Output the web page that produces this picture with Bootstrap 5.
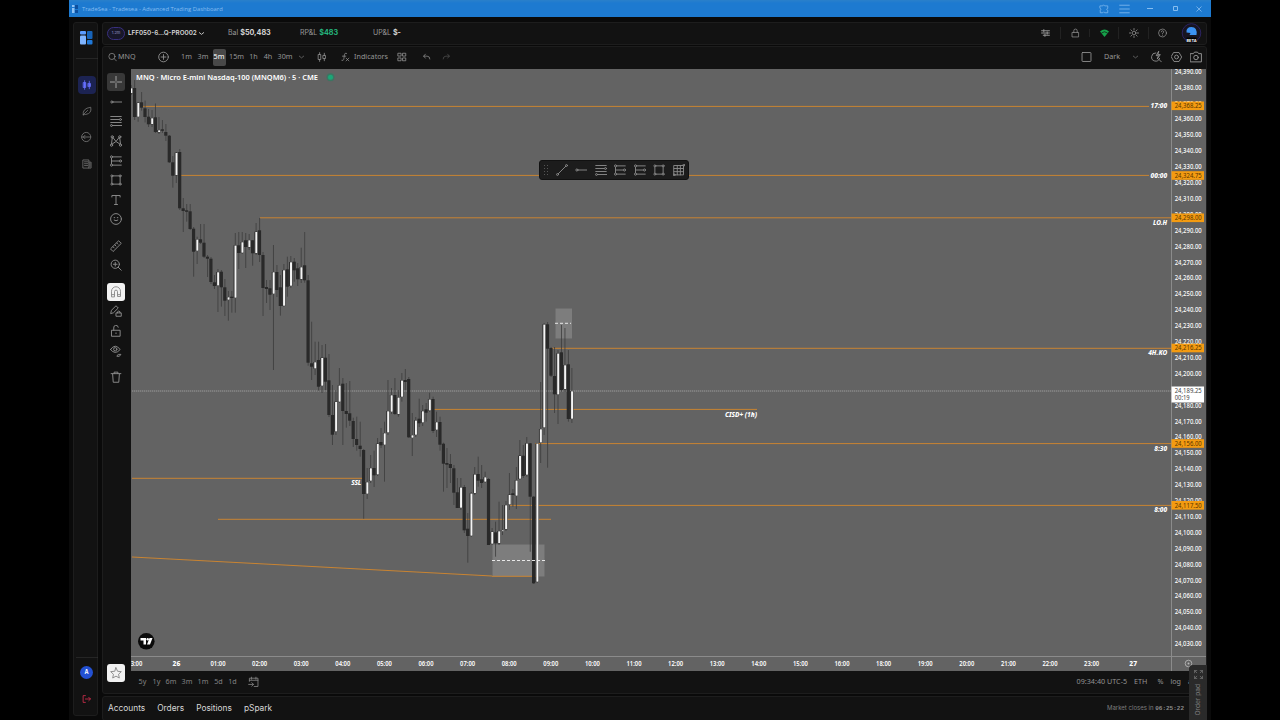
<!DOCTYPE html>
<html lang="en" data-bs-theme="dark">
<head>
<meta charset="utf-8">
<meta name="viewport" content="width=device-width, initial-scale=1">
<title>TradeSea - Advanced Trading Dashboard</title>
<link href="https://cdn.jsdelivr.net/npm/bootstrap@5.3.0/dist/css/bootstrap.min.css" rel="stylesheet">
<style>
body{background:#000;height:720px;overflow:hidden;font-family:Inter,"Noto Sans",sans-serif;font-size:7px;line-height:1;color:#a2a2a2}
svg{display:block}
.ico{width:12px;height:12px;fill:none;stroke:currentColor;stroke-width:1.25;stroke-linecap:round;stroke-linejoin:round;flex:none}
.window-shell{width:1142px;height:720px;margin-left:69px;background:#0a0a0a}
.title-strip{height:17px;background:linear-gradient(#2a80ca 0,#1d7ad0 3px,#1d7ad0);color:#86bdf0;font:5.85px "Open Sans",sans-serif;padding:1px 0 0 3px}
.title-strip .wintools{display:grid;grid-template-columns:20px 21px 30px 22px 24px;justify-items:center;align-items:center;color:#7fb8ee}
.work{height:703px;padding:5px 4px 0 4px;gap:4px}
.panel{background:#121212;border:1px solid #1d1d1d;border-radius:3px}
.rail{width:25px;height:694px;color:#777;padding-left:2px;flex:none}
.rail .cell{height:26.2px;width:18px}
.rail .cell.on span{width:18px;height:18px;border-radius:4px;background:#1c2352;color:#6670ff}
.rail hr{width:22px;margin:0;border-color:#444;opacity:.4}
.avatar{width:13px;height:13px;border-radius:50%;background:#2350d2;color:#fff;font-weight:700;font-size:5.5px}
.main-col{width:1105px;flex:none}
.account{height:23px;padding-bottom:3px;display:grid;grid-template-columns:4px 21px 100px 72px 73px 1fr repeat(6,29.2px);align-items:center;color:#989898;white-space:nowrap}
.account b{color:#d4d4d4;font-size:7.2px}
.account .acct{color:#d6d6d6;font-weight:600;font-size:6.3px}
.account .gain{color:#25b47c}
.account .sep{border-left:1px solid #222}
.idbadge{width:18px;height:13px;border:1px solid #39307f;border-radius:7px;background:#17172a;font-size:4px;color:#9693c8}
.trade{height:648px;margin-top:1px;border-radius:3px}
.toolrow{height:22px;padding-bottom:2px;font-family:"Noto Sans",sans-serif;font-size:7.2px;color:#969696;display:grid;grid-template-columns:3px 12px 31px 29px 17px 16px 16px 19px 15px 14px 20px 13px 28px 18px 34px 28px 20px 20px 1fr 20px 3px 26px 20px 1px 20px 20px 20px;align-items:center;justify-items:center}
.toolrow .picked{background:#484848;color:#fff;border-radius:2px;width:13px;height:17px}
.drawcol{width:28px;height:602px;padding:3.5px 2px 0 0;color:#8d8d8d}
.drawcol .cell{height:19.6px;width:18px}
.drawcol .g1{margin-top:6.6px}
.drawcol .g2{margin-top:7px}
.drawcol .sel span,.drawcol .lit span{width:18px;height:18px;border-radius:3px}
.drawcol .sel span{background:#383838;color:#aaa}
.drawcol .lit span{background:#f2f2f2;color:#8a8a8a}
.drawcol .fav{margin-bottom:-12px}
.ranges{height:22px;padding-left:32px;font-family:"Noto Sans",sans-serif;font-size:7.2px;color:#828282}
.ranges .clock{margin-right:4px;gap:7px;color:#929292}
.tabs-bar{height:25px;margin-top:2px;padding:0 22px 1px 5px;font-size:8.35px;color:#d8d8d8}
.tabs-bar .closing{font-size:6px;color:#7d7d7d}
.tabs-bar .closing code{font-family:"Liberation Mono",monospace;color:#8b8b8b;font-size:6px;font-weight:700}
.chartbox{width:1075px;height:602px;position:relative}
.float-tools{position:absolute;left:408px;top:91px;width:150px;height:20px;background:#1c1c1c;border-radius:3px;color:#8a8a8a;padding:0 3px 0 4px;border:1px solid #111}
.order-pad{position:absolute;left:1189px;top:665px;width:18px;height:55px;background:#2a2a2a;border-radius:4px 0 0 0;color:#7b7b7b;font-size:6.6px;padding-top:5px}
.order-pad span{writing-mode:vertical-rl;transform:rotate(180deg);margin-top:5px}
</style>
<script src="https://cdn.jsdelivr.net/npm/bootstrap@5.3.0/dist/js/bootstrap.bundle.min.js"></script>
</head>
<body>
<svg width="0" height="0" class="d-none">
<symbol id="i-cross" viewBox="0 0 16 16"><path d="M8 0v6M8 10v6M0 8h6M10 8h6M7.7 8h.6"/></symbol>
<symbol id="i-ray" viewBox="0 0 16 16"><circle cx="2.500" cy="8" r="1.400"/><path d="M4 8h12"/></symbol>
<symbol id="i-fib" viewBox="0 0 16 16"><path d="M1 2h14M1 6h11M1 10h14M4 14h12"/><circle cx="14" cy="6" r="1.300"/><circle cx="2" cy="14" r="1.300"/></symbol>
<symbol id="i-pattern" viewBox="0 0 16 16"><path d="M2 12L3 4M4 3.500L7.500 8M8.500 8L12 3.500M13 4l1 8M3 12l4.500-3M8.500 9l4.500 3"/><circle cx="3" cy="2.500" r="1.500"/><circle cx="13" cy="2.500" r="1.500"/><circle cx="2" cy="13.500" r="1.500"/><circle cx="14" cy="13.500" r="1.500"/></symbol>
<symbol id="i-forecast" viewBox="0 0 16 16"><path d="M4 2.500h11M2 8h10M4 13.500h11M2 4.500v7"/><circle cx="2" cy="2.500" r="1.400"/><circle cx="14" cy="8" r="1.400"/><circle cx="2" cy="13.500" r="1.400"/></symbol>
<symbol id="i-rect" viewBox="0 0 16 16"><path d="M4 2.500h8M4 13.500h8M2.500 4v8M13.500 4v8"/><circle cx="2.500" cy="2.500" r="1.300"/><circle cx="13.500" cy="2.500" r="1.300"/><circle cx="2.500" cy="13.500" r="1.300"/><circle cx="13.500" cy="13.500" r="1.300"/></symbol>
<symbol id="i-text" viewBox="0 0 16 16"><path d="M2.500 4V2h11v2M8 2v12M6 14h4"/></symbol>
<symbol id="i-smile" viewBox="0 0 16 16"><circle cx="8" cy="8" r="7.200"/><path d="M5.500 6.200h.8M9.700 6.200h.8M5.500 9.500q2.500 2 5 0"/></symbol>
<symbol id="i-ruler" viewBox="0 0 16 16"><path d="M1 11.500L11.500 1 15 4.500 4.500 15zM4 9l1.500 1.500M6.500 6.500L8 8M9 4l1.500 1.500"/></symbol>
<symbol id="i-zoom" viewBox="0 0 16 16"><circle cx="7" cy="7" r="5.500"/><path d="M11 11l4 4M4.500 7h5M7 4.500v5"/></symbol>
<symbol id="i-magnet" viewBox="0 0 16 16"><path d="M2 14V7a6 6 0 0 1 12 0v7h-4V7.500a2 2 0 0 0-4 0V14zM2 11.500h4M10 11.500h4"/></symbol>
<symbol id="i-penlock" viewBox="0 0 16 16"><path d="M1 11l1-4 6-6 3 3-6 6zM8.500 10.500h6.500V15H8.500zM10 10.500V9q1.700-2 3.400 0v1.500"/></symbol>
<symbol id="i-unlock" viewBox="0 0 16 16"><path d="M2.500 7h11v8h-11zM5 7V4a3 3 0 0 1 6-1M8 10.500v1"/></symbol>
<symbol id="i-lock" viewBox="0 0 16 16"><path d="M2.500 7h11v8h-11zM5 7V4a3 3 0 0 1 6 0v3"/></symbol>
<symbol id="i-eye" viewBox="0 0 16 16"><path d="M.7 6Q7-3 13.500 6 7 14 .7 6zM9.500 14l2-1.500h3l-2 2.500h-3"/><circle cx="7" cy="5.700" r="2.200"/></symbol>
<symbol id="i-trash" viewBox="0 0 16 16"><path d="M1.500 3.500h13M5.500 3.500v-2h5v2M3.500 4l.8 11h7.400l.8-11"/></symbol>
<symbol id="i-star" viewBox="0 0 16 16"><path d="M8 1l2.100 4.700 5 .5-3.700 3.500 1 5L8 12.200l-4.400 2.500 1-5L.9 6.200l5-.5z"/></symbol>
<symbol id="i-search" viewBox="0 0 16 16"><circle cx="7" cy="7" r="5.500"/><path d="M11 11l4 4"/></symbol>
<symbol id="i-plus" viewBox="0 0 16 16"><circle cx="8" cy="8" r="7"/><path d="M4.500 8h7M8 4.500v7"/></symbol>
<symbol id="i-down" viewBox="0 0 16 16"><path d="M3 6l5 4 5-4"/></symbol>
<symbol id="i-candle" viewBox="0 0 16 16"><path d="M2.500 4h3.500v8H2.500zM4.200 1v3M4.200 12v3M10 5.500h3.500v5H10zM11.700 2v3.500M11.700 10.500V14"/></symbol>
<symbol id="i-fx" viewBox="0 0 16 16"><path d="M10 1.500Q6.500 0 6 4L5 12q-.5 3-3.500 2M2.500 6.500h6M9 10l5 5M14 10l-5 5"/></symbol>
<symbol id="i-grid" viewBox="0 0 16 16"><path d="M2 2h4.500v4.500H2zM9.500 2H14v4.500H9.500zM2 9.500h4.500V14H2zM9.500 9.500H14V14H9.500z"/></symbol>
<symbol id="i-undo" viewBox="0 0 16 16"><path d="M6 3L3 6.500 6 10M3 6.500h6q5 0 5 5"/></symbol>
<symbol id="i-redo" viewBox="0 0 16 16"><path d="M10 3l3 3.500L10 10M13 6.500H7q-5 0-5 5"/></symbol>
<symbol id="i-square" viewBox="0 0 16 16"><rect x="1.500" y="1.500" width="13" height="13" rx="1"/></symbol>
<symbol id="i-quick" viewBox="0 0 16 16"><path d="M7 2a6 6 0 1 0 5.500 8M11.500 11.500L15 15M11 0L7.500 6H11l-2 5 4.500-6.500h-3z"/></symbol>
<symbol id="i-hex" viewBox="0 0 16 16"><path d="M4.300 1.500h7.400L15.500 8l-3.800 6.500H4.300L.5 8z"/><circle cx="8" cy="8" r="2.800"/></symbol>
<symbol id="i-cam" viewBox="0 0 16 16"><path d="M.8 3.500H4.500L6 1.500h4l1.500 2h3.700v11H.8z"/><circle cx="8" cy="8.700" r="3"/></symbol>
<symbol id="i-sliders" viewBox="0 0 16 16"><path d="M1 4h14M1 8h14M4 12h11M5 2v4M11 6v4M7 10v4" stroke-width="1.700"/></symbol>
<symbol id="i-sun" viewBox="0 0 16 16"><circle cx="8" cy="8" r="3"/><path d="M8 .8v2M8 13.200v2M.8 8h2M13.200 8h2M3 3l1.300 1.300M11.700 11.700L13 13M3 13l1.300-1.300M11.700 4.300L13 3"/></symbol>
<symbol id="i-help" viewBox="0 0 16 16"><circle cx="8" cy="8" r="7"/><path d="M5.800 6Q6 4 8 4t2.200 2Q10.200 7.200 8 8.500v.8M8 11.800v.3"/></symbol>
<symbol id="i-leaf" viewBox="0 0 16 16"><path d="M2 14Q0 4 14 2 16 12 6 13.500 3.500 13.700 2 14zM2 14l7-7"/></symbol>
<symbol id="i-globe" viewBox="0 0 16 16"><circle cx="8" cy="8" r="7"/><path d="M1 8h12M6 5.500L3.500 8 6 10.500"/></symbol>
<symbol id="i-doc" viewBox="0 0 16 16"><path d="M2 1.500h9v13H2zM11 5h3.500v9.500H11M4 4.500h5M4 7.500h5M4 10.500h5M12.700 7v5"/></symbol>
<symbol id="i-out" viewBox="0 0 16 16"><path d="M6 2H2v12h4M6 8h9M12 5l3 3-3 3" stroke-width="1.600"/></symbol>
<symbol id="i-cal" viewBox="0 0 16 16"><path d="M2 7V2.500h12.500v12H9M2 5.500h12.500M5 1v3M11.500 1v3M1 11.500h7M5.500 9L8 11.500 5.500 14"/></symbol>
<symbol id="i-puzzle" viewBox="0 0 16 16"><path d="M2 3h4q1-3.500 3 0h5v4q-4 1.500 0 3v4H9q-1.500-3-3 0H2v-4q3-2 0-3z"/></symbol>
<symbol id="i-menu" viewBox="0 0 16 16"><path d="M1 2.500h14M1 8h14M1 13.500h14"/></symbol>
<symbol id="i-line" viewBox="0 0 16 16"><path d="M3 13L13 3"/><circle cx="2" cy="14" r="1.300"/><circle cx="14" cy="2" r="1.300"/></symbol>
<symbol id="i-gridbox" viewBox="0 0 16 16"><path d="M1.500 2h12.500v12.500H1.500zM5.700 2v12.500M9.800 2v12.500M1.500 6H14M1.500 10.200H14"/><circle cx="14.500" cy="1.500" r="1.300"/><circle cx="1.500" cy="14.500" r="1.300"/></symbol>
<symbol id="i-expand" viewBox="0 0 16 16"><path d="M1 5V1h4M11 1h4v4M15 11v4h-4M5 15H1v-4M1 1l4 4M15 1l-4 4M15 15l-4-4M1 15l4-4"/></symbol>
</svg>

<div class="window-shell">
  <header class="title-strip d-flex align-items-center justify-content-between">
    <div class="d-flex align-items-center gap-1">
      <svg width="6" height="8" viewBox="0 0 6 8"><path fill="#8fc2f5" d="M0 0h2.500v2H0zM0 3h2.500v5H0z"/><path fill="#0d4f9e" d="M3 0h3v4H3zM3 5h3v3H3z"/></svg>
      <span>TradeSea - Tradesea - Advanced Trading Dashboard</span>
    </div>
    <div class="wintools">
      <svg class="ico" style="width:10px"><use href="#i-puzzle"/></svg>
      <svg class="ico" style="width:11px"><use href="#i-menu"/></svg>
      <svg width="6" height="6"><path d="M0 2.500h6" stroke="#86bdf0"/></svg>
      <svg width="6" height="6"><path d="M.5.500h4v4h-4z" stroke="#86bdf0" fill="none"/></svg>
      <svg width="6" height="6"><path d="M.5.500l5 5M5.500.500l-5 5" stroke="#86bdf0" stroke-width=".8"/></svg>
    </div>
  </header>
  <div class="work d-flex">
    <aside class="rail panel d-flex flex-column align-items-center">
      <svg width="13" height="14" viewBox="0 0 13 14" style="margin-top:8px"><rect width="6" height="3.500" rx="1" fill="#5b9cff"/><rect y="4.500" width="6" height="9" rx="1" fill="#7eb4ff"/><rect x="7" width="5.500" height="8" rx="1" fill="#1763b8"/><rect x="7" y="9" width="5.500" height="4.500" rx="1" fill="#1f78d8"/></svg>
      <hr style="margin:13px 0">
      <div class="cell on d-flex align-items-center justify-content-center"><span class="d-flex align-items-center justify-content-center"><svg class="ico" style="fill:currentColor;width:10px"><use href="#i-candle"/></svg></span></div>
      <div class="cell d-flex align-items-center justify-content-center"><svg class="ico" style="width:10px"><use href="#i-leaf"/></svg></div>
      <div class="cell d-flex align-items-center justify-content-center"><svg class="ico" style="width:10.500px"><use href="#i-globe"/></svg></div>
      <div class="cell d-flex align-items-center justify-content-center"><svg class="ico" style="width:10px"><use href="#i-doc"/></svg></div>
      <hr class="mt-auto">
      <div class="avatar d-flex align-items-center justify-content-center" style="margin-top:8px">A</div>
      <svg class="ico" style="width:9px;color:#c52d49;margin:14px 0 10px"><use href="#i-out"/></svg>
    </aside>
    <main class="main-col">
      <div class="account panel">
        <span></span>
        <span class="idbadge d-flex align-items-center justify-content-center">1.2m</span>
        <span class="acct d-flex align-items-center">LFF050-6...Q-PRO002 <svg class="ico" style="width:7px;height:7px;margin-left:1px;stroke-width:2"><use href="#i-down"/></svg></span>
        <span>Bal <b>$50,483</b></span>
        <span>RP&amp;L <b class="gain">$483</b></span>
        <span>UP&amp;L <b>$-</b></span>
        <span><svg class="ico mx-auto" style="width:9px"><use href="#i-sliders"/></svg></span>
        <span class="sep"><svg class="ico mx-auto" style="width:9px"><use href="#i-lock"/></svg></span>
        <span class="sep"><svg class="mx-auto" width="9" height="8" viewBox="0 0 9 8"><path fill="#16a24a" d="M0 2.500Q4.500-1.500 9 2.500L4.500 8z"/><path d="M1.500 4Q4.500 1.500 7.500 4" fill="none" stroke="#121212" stroke-width=".7"/></svg></span>
        <span class="sep"><svg class="ico mx-auto" style="width:10px"><use href="#i-sun"/></svg></span>
        <span class="sep"><svg class="ico mx-auto" style="width:9px"><use href="#i-help"/></svg></span>
        <span><svg class="mx-auto" width="21" height="20" viewBox="0 0 21 20"><circle cx="10.500" cy="10" r="9.300" fill="#171421" stroke="#2b2260"/><path fill="#3b92f2" d="M5.500 9.500q-.5-5.500 5-5.500 6 0 5 8H8.500l1-2z"/><rect x="5.500" y="14.500" width="10" height="5" fill="#000"/><text x="10.500" y="18.500" font-size="3.900" font-weight="700" fill="#fff" text-anchor="middle">BETA</text></svg></span>
      </div>
      <section class="trade panel">
        <div class="toolrow">
          <span></span><svg class="ico" style="width:9px"><use href="#i-search"/></svg><span class="me-auto">MNQ</span><svg class="ico" style="width:11px"><use href="#i-plus"/></svg>
          <span>1m</span><span>3m</span><span class="picked d-flex align-items-center justify-content-center">5m</span><span>15m</span><span>1h</span><span>4h</span><span>30m</span>
          <svg class="ico" style="width:7px"><use href="#i-down"/></svg><svg class="ico" style="width:10px"><use href="#i-candle"/></svg><svg class="ico" style="width:9px"><use href="#i-fx"/></svg><span class="me-auto">Indicators</span><svg class="ico" style="width:10px"><use href="#i-grid"/></svg><svg class="ico" style="width:9px"><use href="#i-undo"/></svg><svg class="ico" style="width:9px;opacity:.5"><use href="#i-redo"/></svg>
          <span></span><svg class="ico" style="width:11px"><use href="#i-square"/></svg><span></span><span>Dark</span><svg class="ico" style="width:7px"><use href="#i-down"/></svg><span></span><svg class="ico" style="width:11px"><use href="#i-quick"/></svg><svg class="ico" style="width:11px"><use href="#i-hex"/></svg><svg class="ico"><use href="#i-cam"/></svg>
        </div>
        <div class="d-flex">
          <div class="drawcol d-flex flex-column align-items-center" id="tools"></div>
          <div class="chartbox">
            <svg id="chart" width="1075" height="602" viewBox="131 69 1075 602"></svg>
            <div class="float-tools d-flex align-items-center justify-content-between">
              <svg width="4" height="10" fill="#555"><path d="M0 0h1v1H0zM3 0h1v1H3zM0 3h1v1H0zM3 3h1v1H3zM0 6h1v1H0zM3 6h1v1H3zM0 9h1v1H0zM3 9h1v1H3z"/></svg>
              <svg class="ico"><use href="#i-line"/></svg><svg class="ico"><use href="#i-ray"/></svg><svg class="ico"><use href="#i-fib"/></svg><svg class="ico"><use href="#i-forecast"/></svg><svg class="ico"><use href="#i-forecast"/></svg><svg class="ico"><use href="#i-rect"/></svg><svg class="ico"><use href="#i-gridbox"/></svg>
            </div>
          </div>
        </div>
        <div class="ranges d-flex align-items-center justify-content-between">
          <div class="d-flex align-items-center" id="spans"></div>
          <div class="clock d-flex"><span>09:34:40 UTC-5</span><span>ETH</span><span style="margin-left:3px">%</span><span>log</span><span style="width:14px">a</span></div>
        </div>
      </section>
      <footer class="tabs-bar panel d-flex align-items-center justify-content-between">
        <nav class="d-flex" style="gap:12px"><span>Accounts</span><span>Orders</span><span>Positions</span><span>pSpark</span></nav>
        <span class="closing">Market closes in <code>06:25:22</code></span>
      </footer>
    </main>
  </div>
</div>
<div class="order-pad d-flex flex-column align-items-center"><svg class="ico" style="width:9px;height:9px"><use href="#i-expand"/></svg><span>Order pad</span></div>

<script>
// Drawing toolbar: [icon, extra classes]
const tools=[['cross','sel'],['ray',''],['fib',''],['pattern',''],['forecast',''],['rect',''],['text',''],['smile',''],['ruler','g1'],['zoom',''],['magnet','lit g2'],['penlock',''],['unlock',''],['eye',''],['trash','g2'],['star','lit fav mt-auto']];
document.getElementById('tools').innerHTML=tools.map(([n,c])=>`<div class="cell d-flex flex-shrink-0 align-items-center justify-content-center ${c}"><span class="d-flex align-items-center justify-content-center"><svg class="ico"><use href="#i-${n}"/></svg></span></div>`).join('');
document.getElementById('spans').innerHTML=[['5y',15],['1y',13],['6m',16],['3m',16],['1m',16],['5d',15],['1d',13]].map(([t,w])=>`<span class="text-center" style="width:${w}px">${t}</span>`).join('')+'<svg class="ico" style="width:11px;margin-left:9px"><use href="#i-cal"/></svg>';

// Candles: colour, body top, body bottom, wick top, wick bottom
const data=`w 88 93.3 85 95|b 88 117 80 120|w 102.700 117 102 121.700|b 102.300 107.700 92 110.700|b 108.300 117 100.500 122.500|b 116.700 124.300 109 127|w 118 124.300 110 127|b 117.300 132 103.500 133|w 130 132.300 117 134|b 129.300 130.800 120 133|b 132 135.700 124 141|b 135.700 162.300 135 163|b 162.300 175.700 156 187.700|w 152.700 175.300 152 183|b 152 208.300 149 210|b 208.300 211 198 232|b 210.300 211.800 204 221.700|b 211.300 229 204 230|b 228.700 251.700 227 276.700|w 239.300 251 236.700 264|b 239.300 242.700 224 244|b 242.700 256.700 224 258|b 256.700 258.700 255 277|b 258.700 282 257 284|b 282.300 286 275 289|w 272 285.700 269 312|b 271.700 287.300 270 306.700|b 287.300 300.700 279 316|w 297 300 291 320.700|b 296.700 298 291 312.700|w 245.300 298 233 312.700|b 245.300 253 232 269|w 242 253 232 254|b 240.300 247 233 268|w 240 247.300 234 250|b 240.300 253.300 240 265.700|w 231.700 253.300 223 255|b 230.300 255 218 262|b 255 288 252 316|b 287 289 280 303|b 288.300 294.700 280 310|w 272 294 245 370|b 272 290 265 297|b 287.300 306 275 315.700|w 270 306 264 307|b 269.300 286.700 256.700 296.700|w 262 286 256 288|b 261.700 270.300 258 281.700|b 268.300 279.300 263 286|w 267 279.300 247.700 283|b 265.300 280.300 232 282.700|b 280.300 362.700 275 365.700|b 363.300 366.700 321.700 380|w 362 368.700 341.700 375|b 360 386.700 341.700 390.700|w 357.700 386 345 393|b 357.700 381.700 344 390|b 380.300 415 354 417|b 415 434.700 385 445|w 401.700 431.700 390 435|w 385.300 402 368 403|b 383.700 411 378 445|b 411 414 383 427.700|b 413.300 420.700 381 426|b 421 439 417.700 447|b 439 445 416.700 450.700|b 445.700 449 421.700 456.700|b 450 494 449 518.700|w 482 494 468 499|w 468 481 455 483|b 468 475.300 450.700 487|w 443.700 474.700 438 476|b 442 445.300 428 448|w 433 445 421.700 481.700|w 411 432.700 380 435|w 395 412 388 414|b 395 414 378 415|w 397.300 414.300 390 416.700|w 380.300 397 373 401.700|b 380 382 369 390|b 379 437.300 377 438|w 435 438 413 456|w 420.300 435 417 437|b 418.700 423.300 398.700 427|w 411 422.700 405 426|b 409.300 412.700 403 421.700|w 399.300 410.700 392.700 412|b 399 431 396.700 433|w 422 430 411.700 437|b 422 444.700 416.700 450.700|b 443.700 463.700 442.700 491.700|b 463 464.700 448 488|b 464 468 454 483|b 468.300 492.700 465 505|b 492.300 508 478 508|w 487.300 508 478 510|b 487 530.300 485 533|b 528.700 536 513 562.700|w 493.300 536 492 537|w 474.300 493.300 467 495|b 474 480.700 456.700 486.700|b 479.300 483 465 488|w 477 482 471.700 483|b 479 545 478 545|w 531.700 544 528 545|b 532.300 543.300 521.700 556.700|w 531 543.300 501.700 545|w 530 531 505 535|w 505 529.300 501 531|w 494.700 504.700 473 510|b 493.300 495 489 506.700|w 480.300 496 467 509|w 455.700 479 440 480|b 455.700 476 445 478|w 443.300 475 437 476.700|b 443.300 496.700 443 551.700|b 496.700 583.300 496 584|w 443.300 582 443 583|w 429 442.700 382 463|w 324.300 427.700 323 435|b 324.300 348.700 322 467.700|b 348 375.700 347 377|b 376 394.300 347 413|w 353.300 394.700 350 424|b 352.300 390 325 391.700|w 365 389.300 328 392|b 364.300 419 350 421.700|w 391 419 368 423`.split('|').map(r=>r.split(' '));
let s='<rect x="131" y="69" width="1075" height="602" fill="#636363"/>';
const line=(x1,y1,x2,y2,c='#c98432',w=1,e='')=>`<line x1="${x1}" y1="${y1}" x2="${x2}" y2="${y2}" stroke="${c}" stroke-width="${w}" ${e}/>`;
const text=(x,y,t,size,e='')=>`<text x="${x}" y="${y}" font-family="Noto Sans, sans-serif" font-size="${size}" fill="#fff" ${e}>${t}</text>`;
// Zones and levels
s+='<rect x="492.500" y="544.500" width="52" height="32" fill="#7d7d7d"/><rect x="555.500" y="308.500" width="16.500" height="30" fill="#7d7d7d"/>';
s+=line(142,106.4,1149,106.4)+line(181,175.4,1149,175.4)+line(260,217.8,1171,217.8)+line(552,348.3,1171,348.3)+line(434,409.4,757,409.4)+line(535,443.6,1171,443.6)+line(510,505.4,1171,505.4)+line(132,478.3,364,478.3)+line(218,519.3,551,519.3)+line(132,557,492,576)+line(492,576.3,536,576.3);
s+=line(132,391,1171,391,'#999',1,'stroke-dasharray="1 1"')+line(132,391,1171,391,'#848484',.6);
data.forEach(([c,t,b,h,l],i)=>{const x=131.2+3.47*i;s+=line(x,h,x,l,'#3c3c3c',.8)+`<rect x="${x-1.7}" y="${t}" width="3.200" height="${b-t}" fill="#292929"/>`;if(c==='w')s+=`<rect x="${x-.8}" y="${+t+.3}" width="2" height="${Math.max(.8,b-t-.6)}" fill="#f4f4f4"/>`});
s+=line(492,560.5,545,560.5,'#e8e8e8',1,'stroke-dasharray="3 2"')+line(555,323.3,571,323.3,'#e8e8e8',1,'stroke-dasharray="3 2"');
// Axes
s+=line(1171.5,68,1171.5,671,'#8b8b8b')+line(131,656.5,1207,656.5,'#8b8b8b');
for(let i=0;i<37;i++){const p=24390-i*10;s+=text(1174.7,71.3+i*15.9+2.4,p.toLocaleString('en-US')+'.00',6.8,'font-weight="500" textLength="27" lengthAdjust="spacingAndGlyphs"')}
[[105.8,'24,368.25'],[175.5,'24,324.75'],[217.8,'24,298.00'],[348,'24,216.25'],[443.5,'24,156.00'],[505.3,'24,117.50']].forEach(([y,t])=>s+=`<rect x="1171.500" y="${y-4.300}" width="32.500" height="8.600" fill="#f49b11"/>`+text(1174.7,y+2.3,t,6.8,'style="fill:#583500" textLength="27" lengthAdjust="spacingAndGlyphs"'));
s+='<rect x="1171.500" y="386.500" width="32.500" height="16" fill="#fff"/>'+text(1174.7,393.2,'24,189.25',6.8,'style="fill:#444" textLength="27" lengthAdjust="spacingAndGlyphs"')+text(1174.7,400.4,'00:19',6.8,'style="fill:#444" textLength="15" lengthAdjust="spacingAndGlyphs"');
[['17:00',108.3],['00:00',177.6],['LO.H',225],['4H.KO',355],['8:30',450.7],['8:00',512.2]].forEach(([t,y])=>s+=text(1167.2,y,t,6.5,'font-weight="800" font-style="italic" text-anchor="end"'));
s+=text(725,416.5,'CISD+ (1h)',6.5,'font-weight="800" font-style="italic" textLength="32"')+text(351.2,485,'SSL',6.5,'font-weight="800" font-style="italic" textLength="10"');
const times=['23:00','26'];for(let h=1;h<24;h++)if(h!==17)times.push(String(h).padStart(2,'0')+':00');times.push('27');
times.forEach((t,i)=>s+=text(134.800+i*41.600,665.9,t,6.7,`text-anchor="middle" font-weight="${t.length<3?800:600}"${t.length>2?' textLength="15" lengthAdjust="spacingAndGlyphs"':''}`));
s+=text(136,80,'MNQ · Micro E-mini Nasdaq-100 (MNQM6) · 5 · CME',7.9,'font-weight="600" textLength="182" lengthAdjust="spacingAndGlyphs"')+'<circle cx="330.500" cy="77.300" r="4" fill="#3c7562"/><circle cx="330.500" cy="77.300" r="2.500" fill="#1ca677"/>';
// TradingView badge and axis settings
s+='<circle cx="146.300" cy="641.300" r="8.300" fill="#0b0b0b"/><path fill="#fff" d="M140.500 638h5.500v6.500h-2.500V640.500h-3zM149.500 638h3L150 644.500h-3z"/><circle cx="147.700" cy="639.300" r="1.200" fill="#fff"/>';
s+='<circle cx="1188.500" cy="663.500" r="3.300" fill="none" stroke="#bbb" stroke-width=".8"/><circle cx="1188.500" cy="663.500" r="1" fill="#bbb"/>';
document.getElementById('chart').innerHTML=s;
</script>
</body>
</html>
